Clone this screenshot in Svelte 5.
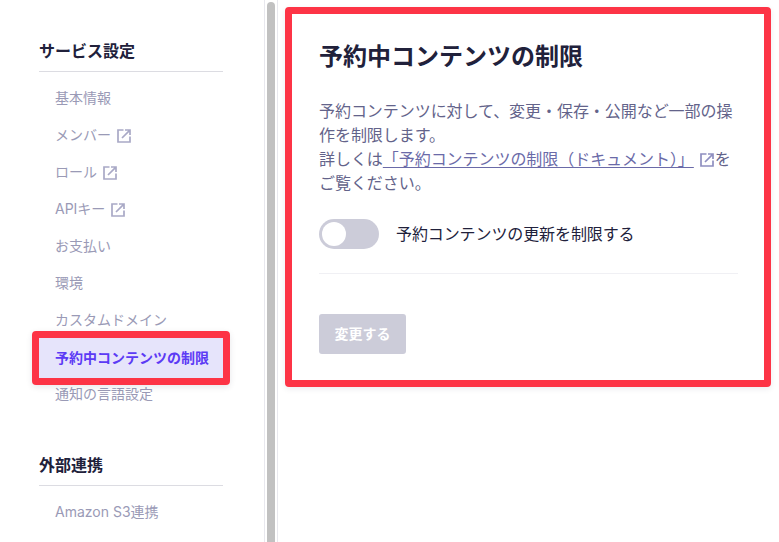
<script>
  const items = [
    { label: '基本情報' },
    { label: 'メンバー', ext: true },
    { label: 'ロール', ext: true },
    { label: 'APIキー', ext: true },
    { label: 'お支払い' },
    { label: '環境' },
    { label: 'カスタムドメイン' },
    { label: '予約中コンテンツの制限', active: true },
    { label: '通知の言語設定' }
  ];
</script>

{#snippet ext(cls)}
  <svg class={cls} viewBox="0 0 14 14" fill="none" stroke="currentColor" stroke-width="1.7" aria-hidden="true">
    <path d="M6.5 1H1v12h12V7.5" />
    <path d="M5 9 12.4 1.6M8 1h5v5" />
  </svg>
{/snippet}

<div class="page">
  <aside class="side">
    <h2 class="group">サービス設定</h2>
    <ul>
      {#each items as it}
        <li class:active={it.active}>
          <span class="label">{it.label}</span>
          {#if it.ext}{@render ext('ico')}{/if}
        </li>
      {/each}
    </ul>
    <h2 class="group second">外部連携</h2>
    <ul>
      <li><span class="label">Amazon S3連携</span></li>
    </ul>
  </aside>
  <div class="track"><div class="thumb"></div></div>
  <main class="main">
    <section class="card">
      <h1>予約中コンテンツの制限</h1>
      <p>
        予約コンテンツに対して、変更・保存・公開など一部の操作を制限します。<br />
        詳しくは<a href="#doc">「予約コンテンツの制限（ドキュメント）」</a>{@render ext('ico link-ico')}をご覧ください。
      </p>
      <div class="toggle-row">
        <span class="toggle"><span class="knob"></span></span>
        <span class="toggle-label">予約コンテンツの更新を制限する</span>
      </div>
      <hr />
      <button disabled>変更する</button>
    </section>
  </main>
</div>

<style>
  :global(body) {
    margin: 0;
    background: #fff;
    font-family: "Inter", "Noto Sans CJK JP", sans-serif;
  }
  .page {
    display: flex;
    width: 779px;
    height: 542px;
    overflow: hidden;
  }
  .side {
    width: 264px;
    flex: none;
    box-sizing: border-box;
    padding: 39px 41px 0 39px;
  }
  .group {
    margin: 0;
    padding-bottom: 8px;
    border-bottom: 1px solid #dcdce2;
    font-size: 16px;
    line-height: 24px;
    font-weight: 700;
    color: #21213b;
  }
  .second { margin-top: 40px; }
  ul {
    list-style: none;
    margin: 8px 0 0;
    padding: 0;
  }
  li {
    display: flex;
    align-items: center;
    height: 37px;
    padding-left: 16px;
    font-size: 14px;
    color: #9a9ab6;
  }
  .label { padding-bottom: 3px; }
  li.active {
    height: 40px;
    margin: -1px 0 -2px;
    background: #e6e4fb;
    color: #5c3bf5;
    font-weight: 700;
    position: relative;
  }
  li.active .label { padding-bottom: 2px; }
  li.active::after {
    content: "";
    position: absolute;
    inset: -7px;
    border: 7px solid #fd3446;
    border-radius: 4px;
    box-shadow: 0 2px 6px rgba(30, 30, 60, 0.1);
  }
  .ico {
    width: 14px;
    height: 14px;
    margin-left: 6px;
    color: #a9a9c6;
  }
  .track {
    flex: none;
    width: 14px;
    box-sizing: border-box;
    border-left: 1px solid #e8e8ee;
    border-right: 1px solid #e8e8ee;
    padding: 2px 2px 0;
  }
  .thumb {
    height: 100%;
    background: #c1c1c1;
    border-radius: 4px 4px 0 0;
  }
  .main {
    flex: 1;
    padding: 7px 8px 0 7px;
  }
  .card {
    box-sizing: border-box;
    width: 486px;
    height: 380px;
    border: 7px solid #fd3446;
    border-radius: 4px;
    padding: 25px 26px 0 27px;
    box-shadow: 0 2px 6px rgba(30, 30, 60, 0.08);
  }
  h1 {
    margin: 0;
    font-size: 24px;
    line-height: 36px;
    font-weight: 700;
    color: #21213b;
  }
  p {
    margin: 24px 0 0;
    font-size: 16px;
    line-height: 24px;
    letter-spacing: -0.05px;
    color: #63638a;
  }
  a {
    color: #6a6aa8;
    text-decoration: underline;
    text-underline-offset: 2px;
  }
  .link-ico {
    margin: 0 1px 0 6px;
    vertical-align: -2px;
    color: #8f8fc0;
  }
  .toggle-row {
    display: flex;
    align-items: center;
    margin-top: 24px;
  }
  .toggle {
    width: 60px;
    height: 30px;
    box-sizing: border-box;
    padding: 3px;
    border-radius: 15px;
    background: #ccccd9;
    flex: none;
  }
  .knob {
    display: block;
    width: 24px;
    height: 24px;
    border-radius: 50%;
    background: #fff;
  }
  .toggle-label {
    margin-left: 17px;
    padding-bottom: 3px;
    font-size: 16px;
    letter-spacing: -0.1px;
    color: #21213b;
  }
  hr {
    margin: 24px 0 0;
    border: 0;
    border-top: 1px solid #f0f0f4;
  }
  button {
    display: block;
    margin-top: 40px;
    width: 87px;
    height: 40px;
    padding: 0 0 2px;
    border: 0;
    border-radius: 3px;
    background: #ccccd9;
    color: #fff;
    font: 700 14px "Inter", "Noto Sans CJK JP", sans-serif;
  }
</style>
